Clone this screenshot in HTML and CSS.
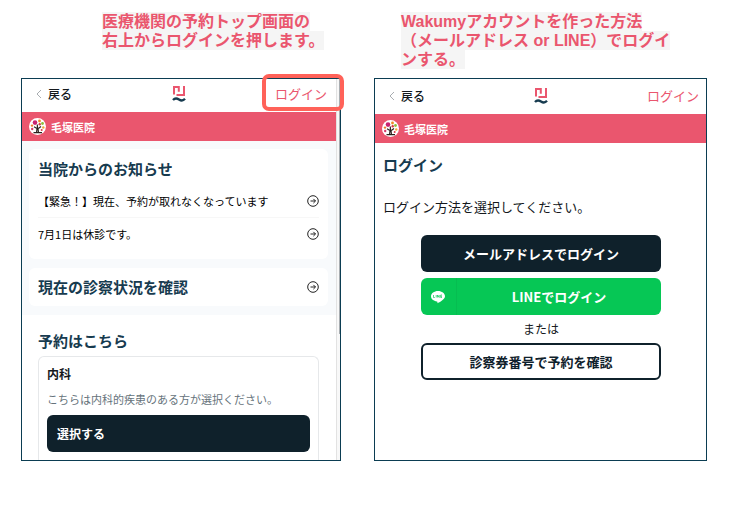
FILE: index.html
```html
<!DOCTYPE html>
<html lang="ja">
<head>
<meta charset="utf-8">
<meta name="viewport" content="width=device-width, initial-scale=1">
<title>ログイン方法</title>
<link rel="stylesheet" href="styles.css">
</head>
<body>
<svg class="defs" aria-hidden="true">
  <symbol id="logo" viewBox="0 0 14 18">
    <path d="M2 9.500V2H6.800V6.800M4.500 10H12V1" fill="none" stroke="#ea566e" stroke-width="2"/>
    <path d="M1 15C3 12.800 5 13.200 7 14.500S11 16 13 13.800" fill="none" stroke="#173b4f" stroke-width="2.400"/>
  </symbol>
  <symbol id="chevron" viewBox="0 0 6 10">
    <path d="M5 1 1 5l4 4" fill="none" stroke="#a9adb1"/>
  </symbol>
  <symbol id="arrow" viewBox="0 0 12 12">
    <circle cx="6" cy="6" r="5.300" fill="none" stroke="#222" stroke-width="1"/>
    <path d="M3.500 6h5M6.400 3.900 8.500 6 6.400 8.100" fill="none" stroke="#222" stroke-width="1"/>
  </symbol>
  <symbol id="tree" viewBox="0 0 17 17">
    <circle cx="8.500" cy="8.500" r="8.500" fill="#fff"/>
    <path d="M7.500 15 8 10.500 5 8.800M8.500 11 8.300 6.500M9.300 10.500 12 8.500M9.500 15 9 10.500M4.500 14.600H13" fill="none" stroke="#2b211d" stroke-width="1.200"/>
    <circle cx="6" cy="4.600" r="2.300" fill="#c8226f"/>
    <circle cx="10.500" cy="3" r="1.400" fill="#ee8a22"/>
    <circle cx="3" cy="7.600" r="1.200" fill="#ef7d29"/>
    <circle cx="13.500" cy="5.500" r="1.400" fill="#8ebf3c"/>
    <circle cx="10.700" cy="6.200" r="1.200" fill="#d93a46"/>
    <circle cx="14.300" cy="9.500" r="1.200" fill="#efa83a"/>
    <circle cx="3.200" cy="11" r="1.200" fill="#d63b6b"/>
    <circle cx="12.700" cy="12" r="1" fill="#d93a46"/>
  </symbol>
</svg>
<main class="guide">
  <p class="caption caption-top"><span>医療機関の予約トップ画面の</span><span>右上からログインを押します。</span></p>
  <p class="caption caption-login"><span>Wakumyアカウントを作った方法</span><span>（メールアドレス or LINE）でログイ</span><span>ンする。</span></p>

  <section class="screen screen-top">
    <div class="page">
      <header class="bar">
        <a class="back" href="#"><svg class="chevron"><use href="#chevron"/></svg>戻る</a>
        <svg class="logo"><use href="#logo"/></svg>
        <a class="login" href="#">ログイン</a>
        <span class="marker"></span>
      </header>
      <div class="clinic"><svg class="tree"><use href="#tree"/></svg>毛塚医院</div>
      <div class="notices">
        <div class="card news">
          <h2>当院からのお知らせ</h2>
          <a class="row" href="#">【緊急！】現在、予約が取れなくなっています<svg class="arrow"><use href="#arrow"/></svg></a>
          <a class="row" href="#">7月1日は休診です。<svg class="arrow"><use href="#arrow"/></svg></a>
        </div>
        <a class="card status" href="#"><h2>現在の診察状況を確認</h2><svg class="arrow"><use href="#arrow"/></svg></a>
      </div>
      <div class="booking">
        <h2>予約はこちら</h2>
        <div class="department">
          <h3>内科</h3>
          <p>こちらは内科的疾患のある方が選択ください。</p>
          <button class="button select" type="button">選択する</button>
        </div>
      </div>
    </div>
    <div class="track"><div class="thumb"></div></div>
  </section>

  <section class="screen">
    <div class="page">
      <header class="bar bar-tall">
        <a class="back" href="#"><svg class="chevron"><use href="#chevron"/></svg>戻る</a>
        <svg class="logo"><use href="#logo"/></svg>
        <a class="login" href="#">ログイン</a>
      </header>
      <div class="clinic"><svg class="tree"><use href="#tree"/></svg>毛塚医院</div>
      <div class="signin">
        <h2>ログイン</h2>
        <p>ログイン方法を選択してください。</p>
        <div class="methods">
          <button class="button" type="button">メールアドレスでログイン</button>
          <button class="button line" type="button">
            <span class="line-icon"><svg viewBox="0 0 14 14"><path d="M7 1C3.200 1 0 3.300 0 6.300c0 2.700 2.500 4.800 5.900 5.200.8.200.6.700.5 1.800 2.200-1 7.600-3.800 7.600-7C14 3.300 10.800 1 7 1z" fill="#fff"/><path d="M2.500 5v2.500h1.300M5.200 5v2.500M6.500 7.500V5l1.700 2.500V5M11 5H9.700v2.500H11M9.700 6.300H11" fill="none" stroke="#06c755" stroke-width=".7"/></svg></span>
            <span class="line-label">LINEでログイン</span>
          </button>
          <span class="or">または</span>
          <button class="button outline" type="button">診察券番号で予約を確認</button>
        </div>
      </div>
    </div>
  </section>
</main>
</body>
</html>
```

FILE: styles.css
```css
* {
  box-sizing: border-box;
}

body {
  margin: 0;
  background: #fff;
  color: #14181c;
  font-family: "Noto Sans CJK JP", sans-serif;
  font-size: 13px;
  line-height: 20px;
}

h2,
h3,
p {
  margin: 0;
}

h2 {
  color: #173b4f;
  font-size: 15px;
  line-height: 20px;
}

a {
  color: inherit;
  text-decoration: none;
}

svg {
  display: block;
  flex: none;
}

.defs {
  position: absolute;
  width: 0;
  height: 0;
}

.guide {
  display: grid;
  grid-template-columns: 320fr 333fr;
  column-gap: 33px;
  row-gap: 9px;
  padding: 12px 37px 48px 21px;
}

.caption {
  color: #ea566e;
  font-family: "Liberation Sans", "Noto Sans CJK JP", sans-serif;
  font-size: 16px;
  font-weight: 700;
  line-height: 19px;
  white-space: nowrap;
}

.caption span {
  display: block;
  width: fit-content;
  background: #f5f5f5;
}

.caption-top {
  padding-left: 81px;
}

.caption-login {
  padding-left: 27px;
}

.screen {
  display: flex;
  border: 1px solid #0b3d52;
}

.page {
  flex: 1;
  min-width: 0;
}

.track {
  position: relative;
  width: 4px;
  border-left: 1px solid #e2e2e2;
  background: #f8f8f8;
}

.thumb {
  position: absolute;
  top: 0;
  right: 0;
  width: 1px;
  height: 67%;
  background: #a8adb1;
}

.bar {
  position: relative;
  display: grid;
  grid-template-columns: 1fr auto 1fr;
  align-items: center;
  height: 33px;
  padding: 0 9px 3px;
}

.bar-tall {
  height: 35px;
  padding: 0 7px 2px;
}

.back {
  display: flex;
  align-items: center;
  gap: 6px;
  padding-left: 5px;
  font-size: 12px;
  font-weight: 500;
}

.bar-tall .back {
  padding-left: 7px;
}

.chevron {
  width: 6px;
  height: 10px;
}

.logo {
  width: 14px;
  height: 18px;
}

.login {
  justify-self: end;
  color: #ea566e;
}

.marker {
  position: absolute;
  z-index: 1;
  top: -5px;
  right: -8px;
  width: 82px;
  height: 37px;
  border: 4px solid #ff6259;
  border-radius: 7px;
}

.clinic {
  display: flex;
  align-items: center;
  gap: 5px;
  height: 29px;
  padding-left: 7px;
  background: #ea566e;
  color: #fff;
  font-size: 11px;
  font-weight: 700;
}

.tree {
  width: 17px;
  height: 17px;
}

.notices {
  display: grid;
  gap: 9px;
  padding: 8px 8px 9px 7px;
  background: #f8fafc;
}

.card {
  border-radius: 6px;
  background: #fff;
}

.news {
  padding: 10px 9px 9px;
}

.news h2 {
  margin-bottom: 5px;
}

.row {
  display: flex;
  align-items: center;
  justify-content: space-between;
  height: 33px;
  color: #000;
  font-size: 11px;
}

.row + .row {
  border-top: 1px solid #f7f7f7;
}

.arrow {
  width: 12px;
  height: 12px;
}

.status {
  display: flex;
  align-items: center;
  justify-content: space-between;
  height: 38px;
  padding: 0 9px;
}

.booking {
  padding: 16px 17px 0 16px;
}

.department {
  margin-top: 5px;
  padding: 8px 8px 8px;
  border: 1px solid #e6e8ea;
  border-bottom: 0;
  border-radius: 6px 6px 0 0;
}

.department h3 {
  font-size: 12px;
  line-height: 18px;
}

.department p {
  margin: 7px 0;
  color: #66737b;
  font-size: 11px;
  line-height: 18px;
}

.button {
  display: block;
  width: 100%;
  height: 37px;
  padding: 0 10px;
  border: 0;
  border-radius: 6px;
  background: #0f212b;
  color: #fff;
  font: inherit;
  font-weight: 700;
}

.select {
  font-size: 12px;
  text-align: left;
}

.signin {
  padding: 12px 7px 12px 8px;
}

.signin p {
  margin: 22px 0 18px;
}

.methods {
  display: grid;
  gap: 6px;
  width: 76%;
  margin: 0 auto;
}

.line {
  display: flex;
  align-items: center;
  padding: 0;
  background: #06c755;
}

.line-icon {
  display: flex;
  align-items: center;
  justify-content: center;
  width: 36px;
  height: 100%;
  border-right: 1px solid #06bd51;
}

.line-icon svg {
  width: 14px;
  height: 14px;
}

.line-label {
  flex: 1;
}

.or {
  font-size: 12px;
  line-height: 16px;
  text-align: center;
}

.outline {
  border: 2px solid #0f212b;
  background: #fff;
  color: #0f212b;
}
```
